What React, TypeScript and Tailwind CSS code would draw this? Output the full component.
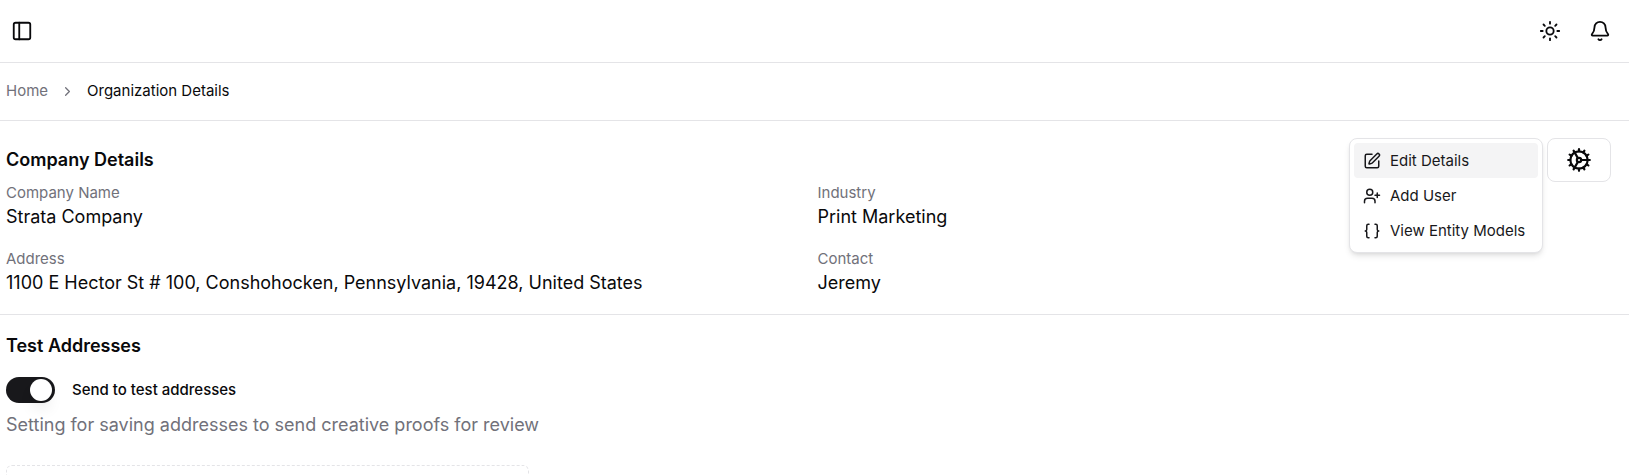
import React from 'react';
import { Bell, Braces, ChevronRight, Cog, PanelLeft, SquarePen, Sun, UserPlus } from 'lucide-react';

const details = [
  { label: 'Company Name', value: 'Strata Company' },
  { label: 'Industry', value: 'Print Marketing' },
  { label: 'Address', value: '1100 E Hector St # 100, Conshohocken, Pennsylvania, 19428, United States' },
  { label: 'Contact', value: 'Jeremy' },
];

const menuItems = [
  { label: 'Edit Details', icon: SquarePen },
  { label: 'Add User', icon: UserPlus },
  { label: 'View Entity Models', icon: Braces },
];

const Header: React.FC = () => (
  <header className="flex h-[63px] items-center justify-between border-b border-[#e4e4e7] pl-[11px] pr-[18px]">
    <button type="button" aria-label="Toggle sidebar">
      <PanelLeft size={22} />
    </button>
    <div className="flex items-center gap-7">
      <button type="button" aria-label="Toggle theme">
        <Sun size={22} />
      </button>
      <button type="button" aria-label="Notifications">
        <Bell size={22} />
      </button>
    </div>
  </header>
);

const Breadcrumb: React.FC = () => (
  <nav aria-label="Breadcrumb" className="border-b border-[#e4e4e7] px-[6px] pb-[17px] pt-4">
    <ol className="flex items-center gap-3 text-[15px] leading-6">
      <li>
        <a href="#" className="text-[#71717a]">Home</a>
      </li>
      <li aria-hidden="true" className="text-[#71717a]">
        <ChevronRight size={15} />
      </li>
      <li aria-current="page">Organization Details</li>
    </ol>
  </nav>
);

const SettingsMenu: React.FC = () => (
  <div className="relative">
    <button
      type="button"
      aria-label="Organization settings"
      className="flex h-11 w-16 items-center justify-center rounded-lg border border-[#e4e4e7]"
    >
      <Cog size={26} />
    </button>
    <div
      role="menu"
      className="absolute right-full top-0 mr-1 w-[194px] rounded-lg border border-[#e4e4e7] bg-white p-1 shadow-md"
    >
      {menuItems.map(({ label, icon: Icon }, i) => (
        <button
          key={label}
          type="button"
          role="menuitem"
          className={`flex w-full items-center gap-[9px] whitespace-nowrap rounded px-[9px] py-[6px] text-[15px] leading-[23px] text-[#18181b] ${i === 0 ? 'bg-[#f4f4f5]' : ''}`}
        >
          <Icon size={18} />
          {label}
        </button>
      ))}
    </div>
  </div>
);

const CompanyDetails: React.FC = () => (
  <section className="border-b border-[#e4e4e7] px-[6px] pb-[18px] pt-[17px]">
    <div className="flex items-center justify-between pr-3">
      <h2 className="text-[18px] font-semibold leading-7">Company Details</h2>
      <SettingsMenu />
    </div>
    <dl className="grid grid-cols-2 gap-x-[6px] gap-y-[18px]">
      {details.map((d) => (
        <div key={d.label}>
          <dt className="text-[15px] leading-[22px] text-[#71717a]">{d.label}</dt>
          <dd className="text-[18px] leading-[26px]">{d.value}</dd>
        </div>
      ))}
    </dl>
  </section>
);

const TestAddresses: React.FC = () => (
  <section className="px-[6px] pt-[17px]">
    <h2 className="text-[18px] font-semibold leading-7">Test Addresses</h2>
    <div className="mt-[17px] flex items-center gap-[17px]">
      <input
        id="send-test"
        type="checkbox"
        role="switch"
        defaultChecked
        className="h-[26px] w-[49px] appearance-none rounded-full bg-[#e4e4e7] p-[2px] before:block before:size-[22px] before:rounded-full before:bg-white before:shadow-lg checked:bg-[#18181b] checked:before:ml-auto checked:before:mr-px"
      />
      <label htmlFor="send-test" className="text-[15px] font-medium leading-6">
        Send to test addresses
      </label>
    </div>
    <p className="mt-2 text-[18px] leading-7 text-[#71717a]">
      Setting for saving addresses to send creative proofs for review
    </p>
    <div className="mt-[26px] h-40 w-[523px] rounded-md border border-dashed border-[#e4e4e7]" />
  </section>
);

const App: React.FC = () => {
  return (
    <div className="h-screen overflow-hidden bg-white pr-2 font-['Inter',sans-serif] text-[#09090b]">
      <Header />
      <Breadcrumb />
      <main>
        <CompanyDetails />
        <TestAddresses />
      </main>
    </div>
  );
};

export default App;
